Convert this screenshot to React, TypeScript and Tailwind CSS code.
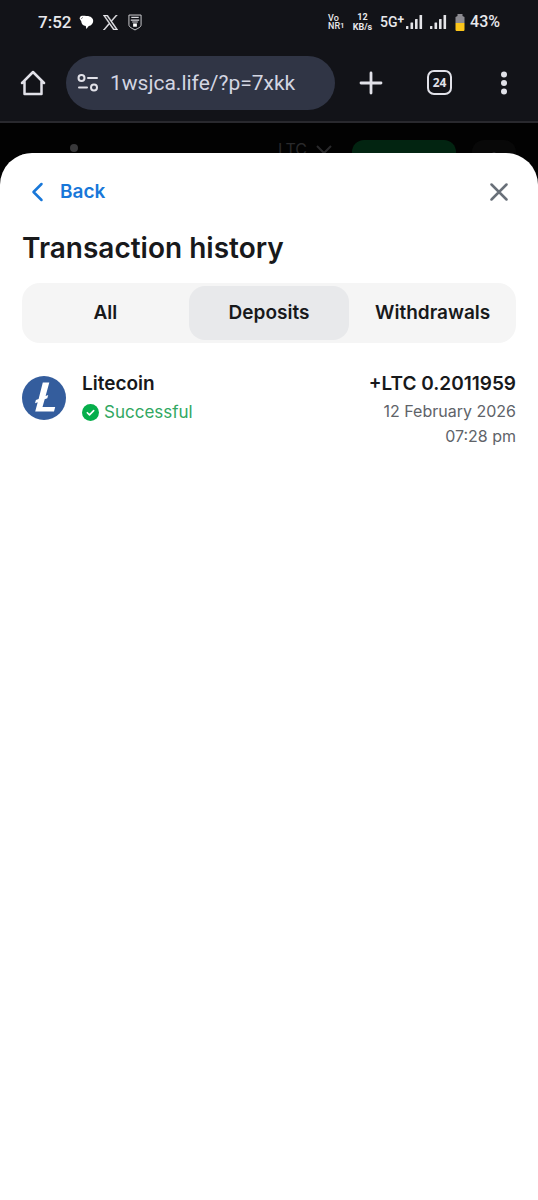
import React from "react";

const TABS = ["All", "Deposits", "Withdrawals"];

function Signal() {
  return (
    <svg width="17" height="16" viewBox="0 0 17 16" fill="#e4e4e8" aria-hidden="true">
      <rect x="0" y="12" width="2.4" height="3" rx="0.5" />
      <rect x="4.5" y="8.5" width="2.6" height="6.5" rx="0.5" />
      <rect x="9" y="5" width="2.6" height="10" rx="0.5" />
      <rect x="13.5" y="1" width="2.6" height="14" rx="0.5" />
    </svg>
  );
}

function StatusBar() {
  return (
    <div className="flex h-11 items-center justify-between px-[38px] font-[Roboto,sans-serif] text-[#e8e8ec]">
      <div className="flex items-center">
        <span className="w-[41px] text-[17px] leading-5 font-medium">7:52</span>
        <svg width="15" height="15" viewBox="0 0 15 15" fill="#fff" aria-hidden="true">
          <path d="M1.6 1.2C3.5.6 6 1 7.8.9c3.900 0 6.400 2.300 6.400 5 0 2.600-2 4.600-4.400 5.100L7.300 14l-.5-3C3.900 10.800 2.300 8.600 2.300 6.600L.5 3.200z" />
          <path d="M2.200 3.800l1.600-1.400" stroke="#121318" strokeWidth="0.600" />
        </svg>
        <svg className="ml-[9px]" width="15" height="15" viewBox="0 0 24 24" aria-hidden="true">
          <path
            fill="#e8e8ec"
            stroke="#e8e8ec"
            strokeWidth="0.8"
            d="M14.234 10.162 22.977 0h-2.072l-7.591 8.824L7.251 0H.258l9.168 13.343L.258 24H2.330l8.016-9.318L16.749 24h6.993zm-2.837 3.299-.929-1.329L3.076 1.560h3.182l5.965 8.532.929 1.329 7.754 11.090h-3.182z"
          />
        </svg>
        <svg className="ml-[10px]" width="14" height="17" viewBox="0 0 15 18" fill="none" stroke="#d8d8dc" aria-hidden="true">
          <path d="M1 1h13v10.500c0 2.500-3 3.500-6.500 5.500C4 15 1 14 1 11.500z" />
          <path d="M3.500 3.500h8M3 6.500h9M4.500 8.500h6" strokeWidth="1.200" />
          <rect x="5.500" y="10" width="4" height="3.500" fill="#fff" stroke="none" />
        </svg>
      </div>
      <div className="flex items-center">
        <div className="flex w-6 items-end text-[9px] leading-[8px] font-medium">
          <div>
            <div>Vo</div>
            <div>NR</div>
          </div>
          <div className="text-[8px]">1</div>
        </div>
        <div className="w-[21px] text-center text-[9px] leading-[10px] font-bold">
          <div>12</div>
          <div>KB/s</div>
        </div>
        <div className="ml-[7px] flex w-[26px] items-start text-[14px] leading-5 font-medium">
          <span>5G</span>
          <span className="text-xs leading-4 font-bold">+</span>
        </div>
        <Signal />
        <span className="w-[7px]" />
        <Signal />
        <svg className="ml-2" width="10" height="17" viewBox="0 0 10 17" aria-hidden="true">
          <path d="M2.500 2V0h5v2l2 1v6h-9V3z" fill="#8c8b91" />
          <path d="M.5 9h9v6.500c0 1-.5 1.500-1.500 1.500H2c-1 0-1.500-.5-1.500-1.500z" fill="#fbc51b" />
        </svg>
        <span className="ml-[5px] text-base leading-5 font-medium">43%</span>
      </div>
    </div>
  );
}

function BrowserBar() {
  return (
    <div className="flex h-[77px] items-center pr-5 pl-5 text-[#e1e1e8]">
      <button type="button" aria-label="Home" className="shrink-0">
        <svg width="26" height="28" viewBox="0 0 26 28" fill="none" stroke="currentColor" strokeWidth="2.500" strokeLinejoin="round" strokeLinecap="round">
          <path d="M2 14 13 3l11 11M4.500 12v13h17V12" />
        </svg>
      </button>
      <div className="ml-5 flex h-[54px] min-w-0 flex-1 items-center rounded-full bg-[#303545] pl-[11px]">
        <svg className="shrink-0" width="22" height="20" viewBox="0 0 22 20" fill="none" stroke="currentColor" strokeWidth="2" strokeLinecap="round" aria-hidden="true">
          <circle cx="4.500" cy="5" r="3" />
          <path d="M11 5h9M2 14.500h8" />
          <circle cx="17" cy="14.500" r="3" />
        </svg>
        <input
          aria-label="Address"
          defaultValue="1wsjca.life/?p=7xkk"
          className="ml-[11px] h-10 w-full min-w-0 bg-transparent font-[Roboto,sans-serif] text-[21px] text-[#d3d6e2] outline-none"
        />
      </div>
      <button type="button" aria-label="New tab" className="ml-6 shrink-0">
        <svg width="24" height="24" viewBox="0 0 24 24" stroke="currentColor" strokeWidth="2.800" strokeLinecap="round">
          <path d="M12 2v20M2 12h20" />
        </svg>
      </button>
      <button type="button" aria-label="24 open tabs" className="ml-11 flex h-[25px] w-[25px] shrink-0 items-center justify-center rounded-[7px] border-[2px] border-current font-['Open_Sans',sans-serif] text-xs font-bold">
        24
      </button>
      <button type="button" aria-label="Menu" className="ml-[38px] flex w-7 shrink-0 justify-center">
        <svg width="8" height="24" viewBox="0 0 8 24" fill="currentColor">
          <circle cx="4" cy="3.500" r="3" />
          <circle cx="4" cy="12" r="3" />
          <circle cx="4" cy="20.500" r="3" />
        </svg>
      </button>
    </div>
  );
}

function DimmedHeader() {
  return (
    <div className="flex h-[62px] items-start overflow-hidden border-t-2 border-[#29292e] bg-[#020202] pr-[22px] pl-[70px]" aria-hidden="true">
      <span className="mt-[21px] h-2 w-2 rounded-full bg-[#38383a]" />
      <span className="mt-[14px] ml-auto text-base leading-6 text-[#29292b]">LTC</span>
      <svg className="mt-[22px] ml-[9px]" width="16" height="10" viewBox="0 0 16 10" fill="none" stroke="#29292b" strokeWidth="2">
        <path d="m1 1 7 7 7-7" />
      </svg>
      <span className="mt-[17px] ml-5 h-10 w-[104px] rounded-xl bg-[#022411]" />
      <span className="mt-[17px] ml-4 flex h-10 w-11 justify-center rounded-xl bg-[#080808] pt-3">
        <span className="h-1 w-1 rounded-full bg-[#29292b]" />
      </span>
    </div>
  );
}

export default function App() {
  const [active, setActive] = React.useState("Deposits");
  return (
    <div className="flex min-h-screen flex-col bg-[#121318] font-[Inter,sans-serif] text-[#18191b]">
      <StatusBar />
      <BrowserBar />
      <DimmedHeader />
      <div className="-mt-[62px] flex flex-1 flex-col pt-8">
        <main className="relative flex-1 rounded-t-[32px] bg-white px-[22px] pt-[23px]">
          <div className="flex h-8 items-center justify-between">
            <button type="button" className="flex items-center pl-[9px] text-[19px] leading-8 font-semibold text-[#1877d9]">
              <svg width="13" height="20" viewBox="0 0 13 20" fill="none" stroke="currentColor" strokeWidth="2.500" strokeLinecap="round" strokeLinejoin="round" aria-hidden="true">
                <path d="M10.500 2 2.500 10l8 8" />
              </svg>
              <span className="ml-4">Back</span>
            </button>
            <button type="button" aria-label="Close" className="mr-2">
              <svg width="18" height="18" viewBox="0 0 18 18" stroke="#697079" strokeWidth="2.500" strokeLinecap="round">
                <path d="m1.500 1.500 15 15M16.500 1.500l-15 15" />
              </svg>
            </button>
          </div>
          <h1 className="mt-5 text-[28px] leading-10 font-semibold">Transaction history</h1>
          <div role="tablist" className="mt-[15px] grid h-[60px] grid-cols-3 gap-[3px] rounded-[18px] bg-[#f5f5f5] p-[3px]">
            {TABS.map((tab) => (
              <button
                key={tab}
                type="button"
                role="tab"
                aria-selected={active === tab}
                onClick={() => setActive(tab)}
                className={
                  active === tab
                    ? "rounded-2xl bg-[#e8e9eb] text-[19px] font-semibold"
                    : "rounded-2xl text-[19px] font-semibold"
                }
              >
                {tab}
              </button>
            ))}
          </div>
          <ul className="mt-7">
            <li className="flex items-start">
              <svg className="mt-[5px] shrink-0" width="44" height="44" viewBox="0 0 44 44" aria-hidden="true">
                <circle cx="22" cy="22" r="22" fill="#345d9d" />
                <path fill="#fff" d="M20.800 6.500h6.500l-3.700 13.500 2.600-1-.9 3.200-2.600 1L20.500 31H33.200L32 35.500H13.200l2.500-9.200-2.700 1 .9-3.200 2.700-1z" />
              </svg>
              <div className="ml-4 flex-1">
                <div className="text-[19px] leading-[26px] font-semibold">Litecoin</div>
                <div className="mt-px flex items-center text-[17px] leading-7 text-[#31a862]">
                  <svg width="17" height="17" viewBox="0 0 17 17" aria-hidden="true">
                    <circle cx="8.500" cy="8.500" r="8.500" fill="#06ae4b" />
                    <path d="m5.300 8.700 2.200 2.200 4.200-4.300" fill="none" stroke="#fff" strokeWidth="1.600" strokeLinecap="round" strokeLinejoin="round" />
                  </svg>
                  <span className="ml-[5px]">Successful</span>
                </div>
              </div>
              <div className="text-right">
                <div className="text-[19px] leading-[26px] font-semibold">+LTC 0.2011959</div>
                <div className="mt-[2px] text-base leading-[25px] text-[#606369]">
                  12 February 2026
                  <br />
                  07:28 pm
                </div>
              </div>
            </li>
          </ul>
        </main>
      </div>
    </div>
  );
}
